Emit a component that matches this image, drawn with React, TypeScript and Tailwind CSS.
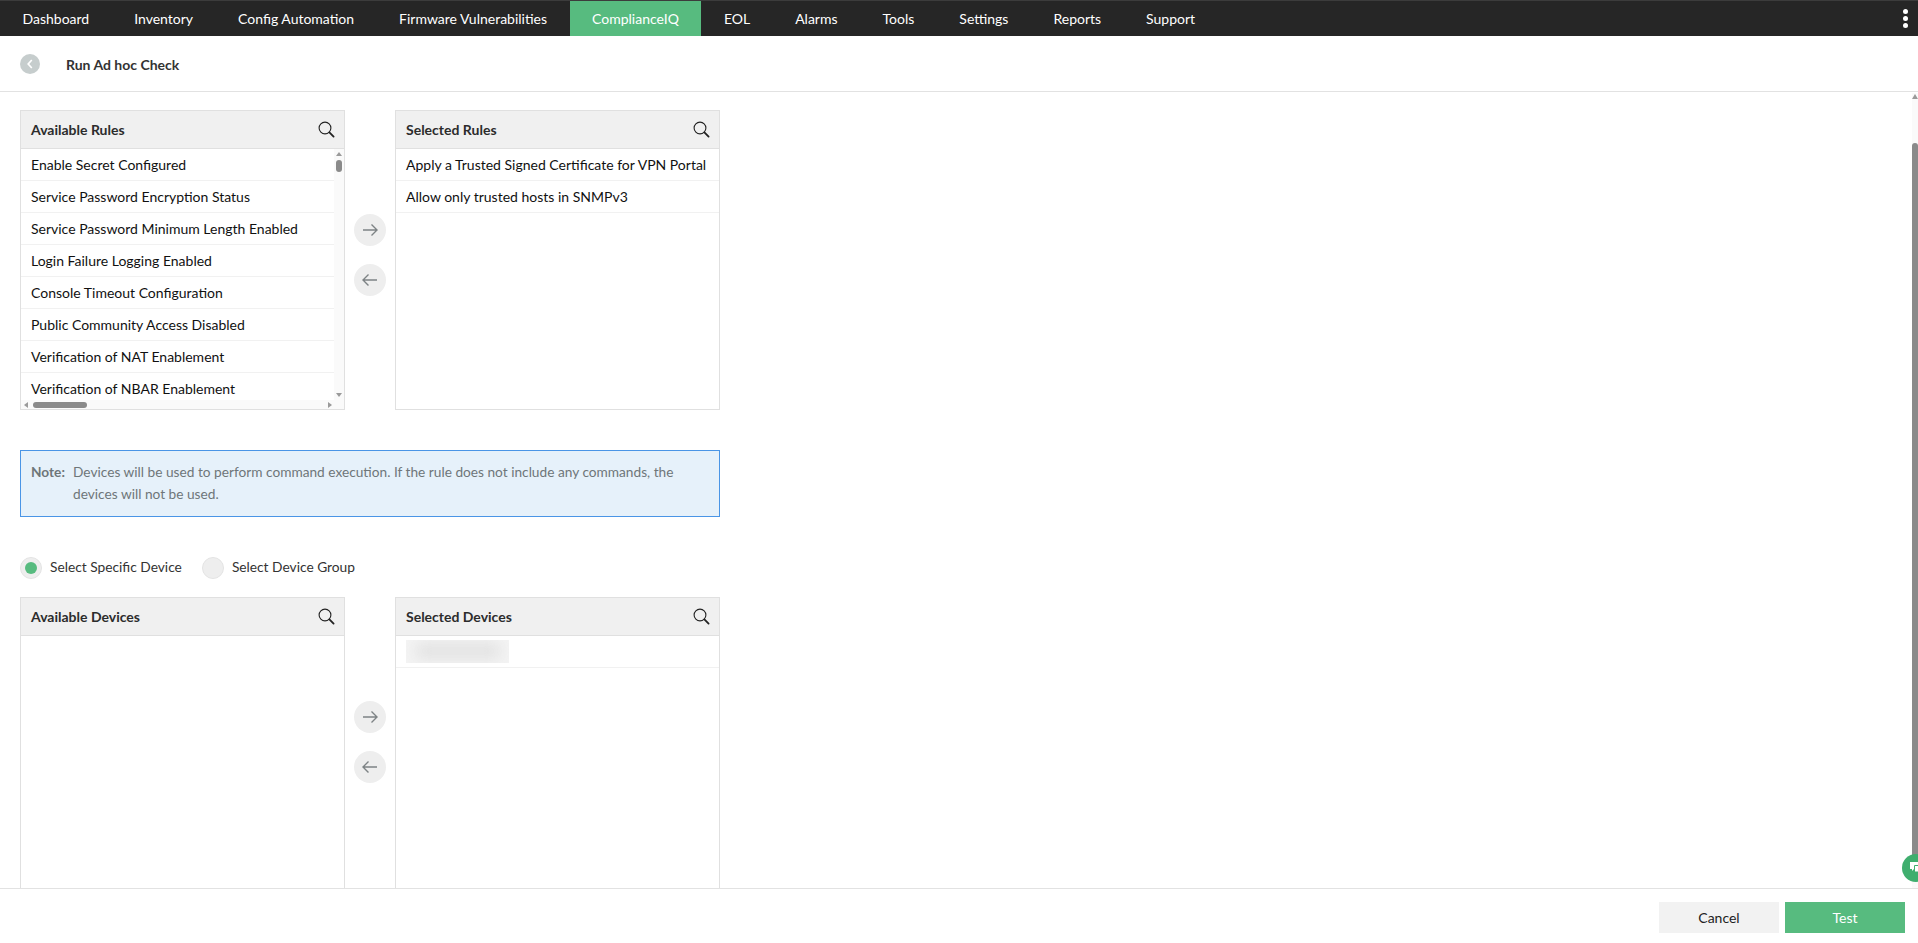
import React from 'react';

const navItems = ['Dashboard', 'Inventory', 'Config Automation', 'Firmware Vulnerabilities', 'ComplianceIQ', 'EOL', 'Alarms', 'Tools', 'Settings', 'Reports', 'Support'];

const availableRules = [
  'Enable Secret Configured',
  'Service Password Encryption Status',
  'Service Password Minimum Length Enabled',
  'Login Failure Logging Enabled',
  'Console Timeout Configuration',
  'Public Community Access Disabled',
  'Verification of NAT Enablement',
  'Verification of NBAR Enablement',
];

const SearchIcon = () => (
  <svg width="17" height="17" viewBox="0 0 17 17" fill="none" className="shrink-0">
    <circle cx="7" cy="7" r="5.9" stroke="#222" strokeWidth="1.1" />
    <path d="M11.4 11.4 L15.6 15.6" stroke="#222" strokeWidth="1.8" strokeLinecap="round" />
  </svg>
);

const ArrowButton = ({ dir }: { dir: 'left' | 'right' }) => (
  <button className="w-8 h-8 rounded-full bg-[#eeeeee] flex items-center justify-center">
    <svg width="16" height="14" viewBox="0 0 16 14" fill="none" stroke="#7d8385" strokeWidth="1.4">
      {dir === 'right' ? <path d="M1 7 H15 M9.5 1.5 L15 7 L9.5 12.5" /> : <path d="M15 7 H1 M6.5 1.5 L1 7 L6.5 12.5" />}
    </svg>
  </button>
);

const Arrows = () => (
  <div className="w-[50px] shrink-0 pt-[104px] flex flex-col items-center gap-[18px]">
    <ArrowButton dir="right" />
    <ArrowButton dir="left" />
  </div>
);

const Row = ({ children }: { children: React.ReactNode }) => (
  <div className="h-8 shrink-0 flex items-center pl-[10px] border-b border-[#f1f1f1] text-[14px] text-[#111] whitespace-nowrap">{children}</div>
);

const Panel = ({ title, children, className }: { title: string; children?: React.ReactNode; className: string }) => (
  <div className={`w-[325px] shrink-0 border border-[#e0e0e0] flex flex-col ${className}`}>
    <div className="h-[38px] shrink-0 bg-[#f0f0f0] border-b border-[#e0e0e0] flex items-center justify-between pl-[10px] pr-[9px]">
      <span className="text-[14px] font-bold text-[#2c2c2c]">{title}</span>
      <SearchIcon />
    </div>
    {children}
  </div>
);

const RulesList = () => (
  <div className="flex-1 min-h-0 flex flex-col">
    <div className="flex-1 min-h-0 flex">
      <div className="flex-1 flex flex-col overflow-hidden">
        {availableRules.map((r) => (
          <Row key={r}>{r}</Row>
        ))}
      </div>
      {/* vertical scrollbar */}
      <div className="w-[10px] bg-[#fafafa] flex flex-col items-center pt-[3px] pb-[3px]">
        <div className="w-0 h-0 border-x-[3px] border-x-transparent border-b-[4px] border-b-[#9a9a9a]" />
        <div className="w-[6px] h-[12px] mt-[4px] rounded-[3px] bg-[#8a8a8a]" />
        <div className="flex-1" />
        <div className="w-0 h-0 border-x-[3px] border-x-transparent border-t-[4px] border-t-[#9a9a9a]" />
      </div>
    </div>
    {/* horizontal scrollbar */}
    <div className="h-[9px] shrink-0 bg-[#fafafa] flex items-center pl-[3px] pr-[12px]">
      <div className="w-0 h-0 border-y-[3px] border-y-transparent border-r-[4px] border-r-[#9a9a9a]" />
      <div className="w-[54px] h-[6px] ml-[5px] rounded-[3px] bg-[#8a8a8a]" />
      <div className="flex-1" />
      <div className="w-0 h-0 border-y-[3px] border-y-transparent border-l-[4px] border-l-[#9a9a9a]" />
    </div>
  </div>
);

export default function App() {
  return (
    <div className="relative w-[1918px] h-[943px] overflow-hidden bg-white flex flex-col font-['Lato','Open_Sans',sans-serif]">
      {/* top nav */}
      <nav className="h-9 shrink-0 bg-[#262626] border-t border-[#3c3c3c] flex items-stretch justify-between">
        <div className="flex items-stretch">
          {navItems.map((item) => (
            <a key={item} className={`px-[22.5px] pb-px flex items-center text-[14px] text-white ${item === 'ComplianceIQ' ? 'bg-[#57bb7f]' : ''}`}>
              {item}
            </a>
          ))}
        </div>
        <div className="flex flex-col justify-center gap-[2px] pr-[10px]">
          <span className="w-[5px] h-[5px] rounded-full bg-white" />
          <span className="w-[5px] h-[5px] rounded-full bg-white" />
          <span className="w-[5px] h-[5px] rounded-full bg-white" />
        </div>
      </nav>

      {/* page title */}
      <div className="h-[56px] shrink-0 border-b border-[#e2e2e2] flex items-center pl-5">
        <span className="w-5 h-5 rounded-full bg-[#c6cdcd] flex items-center justify-center">
          <svg width="8" height="10" viewBox="0 0 8 10" fill="none" stroke="#fff" strokeWidth="1.7">
            <path d="M5.8 1 L2.2 5 L5.8 9" />
          </svg>
        </span>
        <h1 className="ml-[26px] pt-[2px] text-[14px] font-bold text-[#333]">Run Ad hoc Check</h1>
      </div>

      {/* content */}
      <main className="flex-1 min-h-0 overflow-hidden pl-5 pt-[18px]">
        <div className="flex items-start">
          <Panel title="Available Rules" className="h-[300px]">
            <RulesList />
          </Panel>
          <Arrows />
          <Panel title="Selected Rules" className="h-[300px]">
            <Row>Apply a Trusted Signed Certificate for VPN Portal</Row>
            <Row>Allow only trusted hosts in SNMPv3</Row>
          </Panel>
        </div>

        <div className="w-[700px] h-[67px] mt-10 bg-[#e6f1fa] border border-[#4a95e6] pl-[10px] pr-[30px] pt-[10px] flex text-[13.7px] leading-[22px] text-[#6e7679]">
          <span className="w-[42px] shrink-0 font-bold">Note:</span>
          <p>Devices will be used to perform command execution. If the rule does not include any commands, the devices will not be used.</p>
        </div>

        <div className="mt-[40px] h-[22px] flex items-center text-[13.75px] text-[#333]">
          <span className="w-[22px] h-[22px] rounded-full bg-[#eeeeee] border border-[#e4e4e4] flex items-center justify-center">
            <span className="w-3 h-3 rounded-full bg-[#57bb7f]" />
          </span>
          <span className="ml-2 pb-px">Select Specific Device</span>
          <span className="ml-[20px] w-[22px] h-[22px] rounded-full bg-[#eeeeee] border border-[#e4e4e4]" />
          <span className="ml-2 pb-px">Select Device Group</span>
        </div>

        <div className="flex items-start mt-[18px]">
          <Panel title="Available Devices" className="h-[420px]" />
          <Arrows />
          <Panel title="Selected Devices" className="h-[420px]">
            <Row>
              <span className="w-[103px] h-[23px] mb-px overflow-hidden bg-[#f4f4f4] flex items-center justify-center">
                <span className="w-[84px] h-[16px] bg-[#e2e2e2] blur-[7px]" />
              </span>
            </Row>
          </Panel>
        </div>
      </main>

      {/* footer */}
      <footer className="h-[55px] shrink-0 border-t border-[#e2e2e2] bg-white relative z-10 flex items-start justify-end gap-[6px] pt-[13px] pr-[13px]">
        <button className="w-[120px] h-[31px] bg-[#f2f2f2] text-[14px] text-[#222]">Cancel</button>
        <button className="w-[120px] h-[31px] bg-[#57bb7f] text-[14px] text-white">Test</button>
      </footer>

      {/* page scrollbar */}
      <div className="absolute right-0 top-[93px] w-[6px] h-[795px] bg-[#fafafa] flex flex-col">
        <div className="mt-px w-0 h-0 border-x-[3px] border-x-transparent border-b-[5px] border-b-[#9a9a9a]" />
        <div className="mt-[44px] h-[717px] bg-[#8a8a8a] rounded-t-[3px]" />
      </div>

      {/* chat bubble */}
      <div className="absolute left-[1902px] top-[854px] w-7 h-7 rounded-full bg-[#3fae6e] flex items-center pl-2">
        <svg width="20" height="12" viewBox="0 0 20 12" fill="#fff" className="shrink-0">
          <path d="M0 0 H10 V7 H4 L2 9 V7 H0 Z" />
          <path d="M4.5 3.5 H14 V10 H4.5 Z" stroke="#3fae6e" strokeWidth="1" />
        </svg>
      </div>
    </div>
  );
}
